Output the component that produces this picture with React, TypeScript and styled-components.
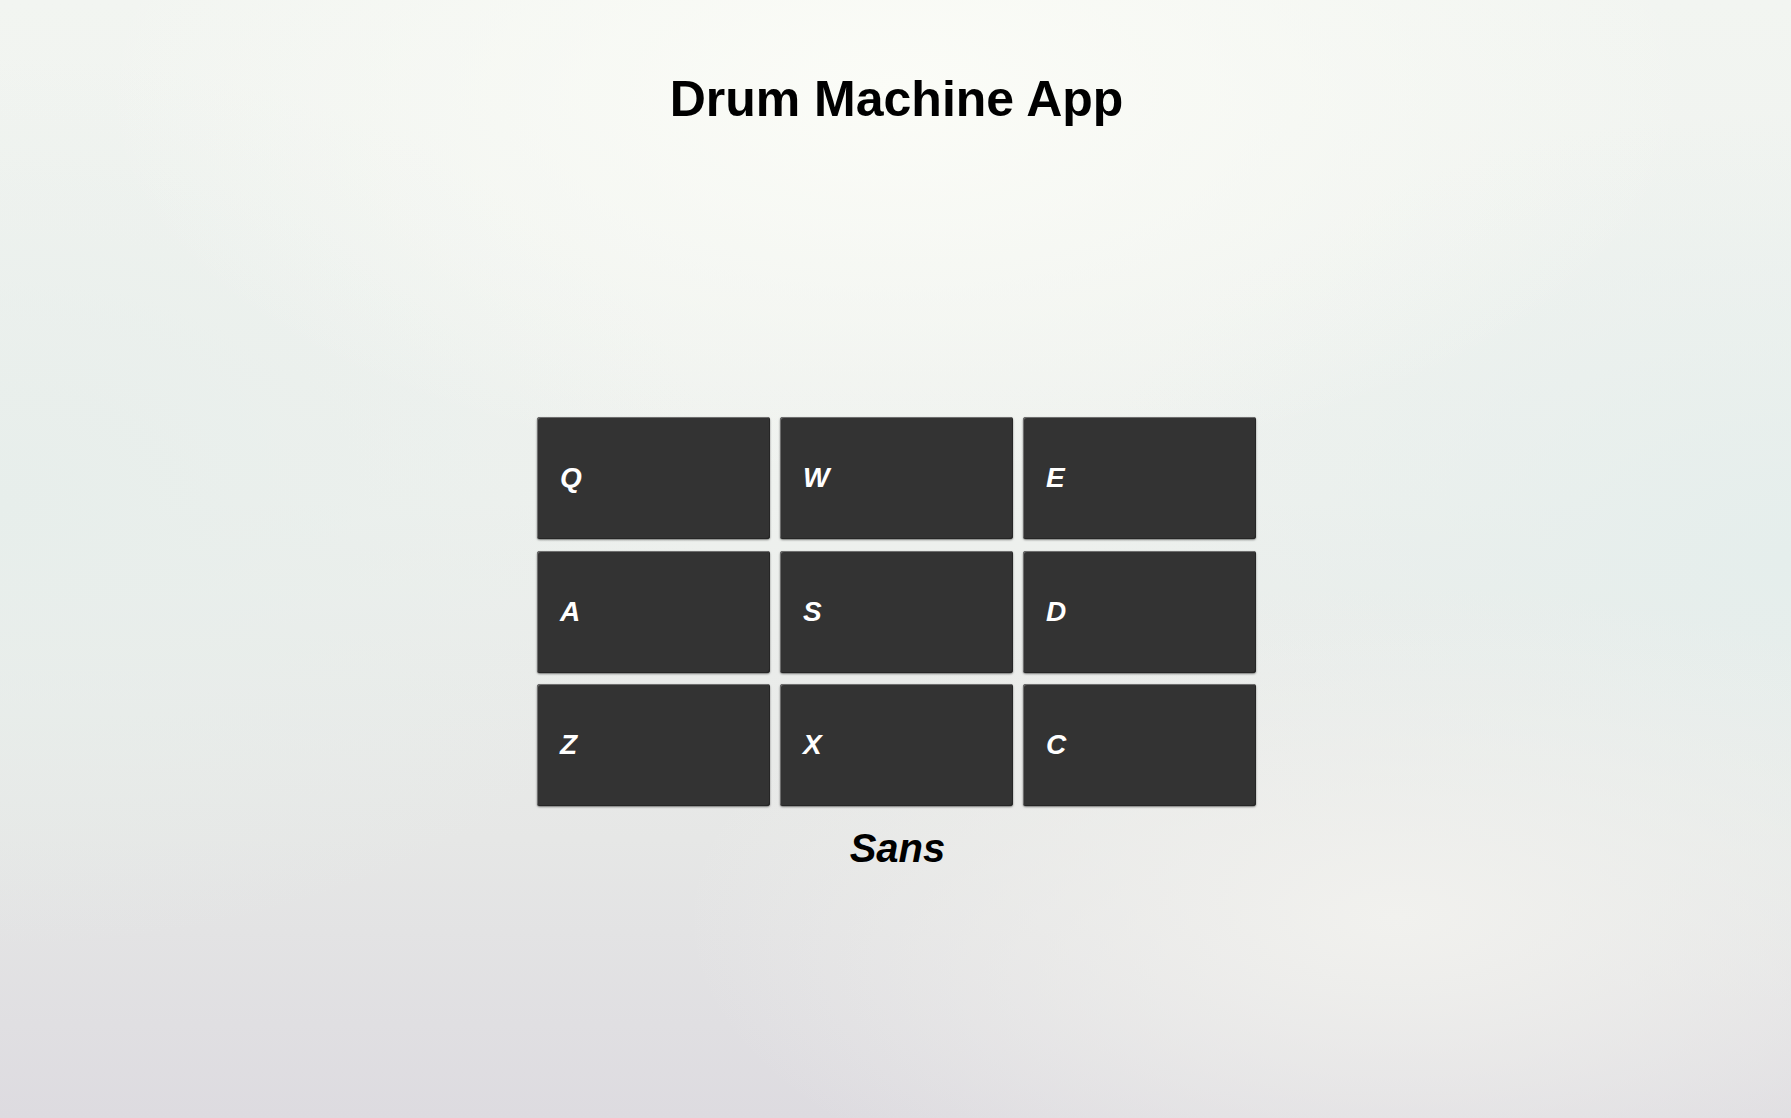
import styled, { createGlobalStyle } from "styled-components";

const GlobalStyle = createGlobalStyle`
  html, body {
    margin: 0;
    padding: 0;
    height: 100%;
  }

  body {
    font-family: "Liberation Sans", Arial, sans-serif;
    color: #000;
  }
`;

const Page = styled.main`
  min-height: 100vh;
  box-sizing: border-box;
  display: flex;
  flex-direction: column;
  align-items: center;
  padding: 70px 0 0 2px;
  background:
    radial-gradient(ellipse 45% 35% at 50% 8%, #fbfcf7 0%, rgba(251, 252, 247, 0) 100%),
    radial-gradient(ellipse 40% 30% at 78% 82%, #f1f1ee 0%, rgba(241, 241, 238, 0) 100%),
    radial-gradient(ellipse 40% 40% at 100% 50%, #e5eeec 0%, rgba(229, 238, 236, 0) 100%),
    radial-gradient(ellipse 40% 40% at 0% 45%, #e7eeeb 0%, rgba(231, 238, 235, 0) 100%),
    linear-gradient(to bottom, #f2f5f1 0%, #eef1ee 45%, #e6e7e6 75%, #dddbe0 100%);
`;

const Title = styled.h1`
  margin: 0;
  font-size: 50px;
  font-weight: 700;
  line-height: normal;
`;

const PadGrid = styled.div`
  margin-top: 289px;
  display: grid;
  grid-template-columns: repeat(3, 233px);
  grid-auto-rows: 122px;
  column-gap: 10px;
  row-gap: 11.5px;
`;

const Pad = styled.button`
  display: flex;
  align-items: center;
  box-sizing: border-box;
  padding: 0 0 0 23px;
  margin: 0;
  background: #333333;
  color: #ffffff;
  border: none;
  border-radius: 3px;
  box-shadow:
    inset 1px 1px 0 #6e6e6e,
    inset -1px -1px 0 #262626,
    0 1px 2px rgba(0, 0, 0, 0.5);
  font-family: "Liberation Sans", Arial, sans-serif;
  font-size: 28px;
  font-weight: 700;
  font-style: italic;
  cursor: pointer;
`;

const Display = styled.p`
  margin: 20px 0 0 2px;
  font-size: 40px;
  font-weight: 700;
  font-style: italic;
  line-height: normal;
`;

const keys = ["Q", "W", "E", "A", "S", "D", "Z", "X", "C"];

const App = () => {
  return (
    <>
      <GlobalStyle />
      <Page>
        <Title>Drum Machine App</Title>
        <PadGrid>
          {keys.map((key) => (
            <Pad key={key} type="button">
              {key}
            </Pad>
          ))}
        </PadGrid>
        <Display>Sans</Display>
      </Page>
    </>
  );
};

export default App;
